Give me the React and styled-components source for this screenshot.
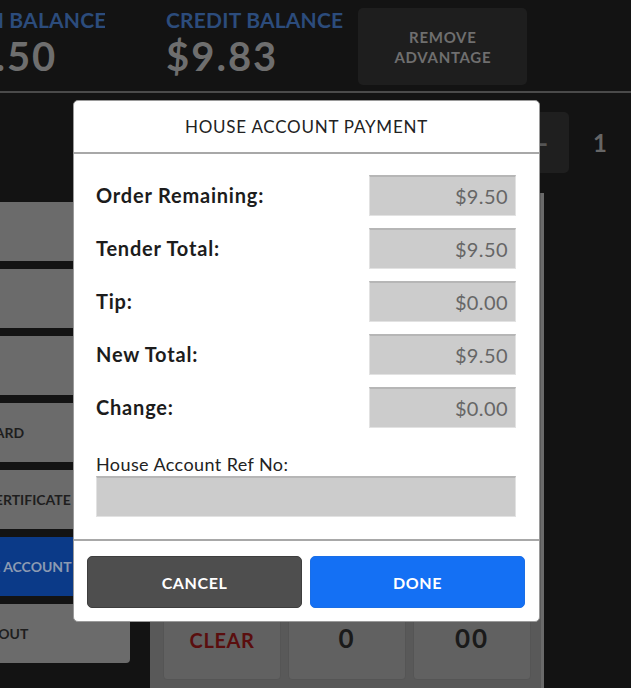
import React from "react";
import styled, { createGlobalStyle } from "styled-components";

const Global = createGlobalStyle`
  html, body { margin: 0; padding: 0; background: #131313; }
  body { font-family: Lato, "Open Sans", sans-serif; }
  * { box-sizing: border-box; }
`;

const Page = styled.div`
  position: relative;
  width: 631px;
  height: 688px;
  overflow: hidden;
  background: #131313;
  display: flex;
  flex-direction: column;
`;

const TopBar = styled.div`
  height: 93px;
  flex: none;
  border-bottom: 2px solid #4a4a4a;
  display: flex;
  align-items: flex-start;
`;

const ClipBlock = styled.div`
  width: 105px;
  flex: none;
  display: flex;
  justify-content: flex-end;
  overflow: hidden;
  margin-right: 61px;
`;

const Balance = styled.div`
  display: flex;
  flex-direction: column;
  padding-top: 8px;
  white-space: nowrap;
  flex: none;
  width: ${(p) => (p.$width ? `${p.$width}px` : "auto")};
  text-align: ${(p) => (p.$width ? "right" : "left")};
`;

const BalanceLabel = styled.div`
  color: #2c4c7c;
  font-weight: 700;
  font-size: 21px;
  line-height: 24px;
  letter-spacing: 0.2px;
`;

const BalanceAmount = styled.div`
  color: #6e6e6e;
  font-weight: 700;
  font-size: 40px;
  line-height: 48px;
  letter-spacing: 2px;
  text-align: left;
`;

const DarkButton = styled.div`
  margin-left: 15px;
  margin-top: 8px;
  width: 169px;
  height: 77px;
  border-radius: 5px;
  background: #1e1e1e;
  color: #6f6f6f;
  font-weight: 700;
  font-size: 15px;
  line-height: 20px;
  letter-spacing: 0.7px;
  text-align: center;
  display: flex;
  align-items: center;
  justify-content: center;
`;

const Main = styled.div`
  flex: 1;
  display: flex;
  min-height: 0;
`;

const LeftCol = styled.div`
  margin-left: -78px;
  width: 208px;
  padding-top: 109px;
  display: flex;
  flex-direction: column;
  gap: 8px;
  flex: none;
`;

const TenderButton = styled.div`
  height: 59px;
  padding-left: 30px;
  border-radius: 0 4px 4px 0;
  background: ${(p) => (p.$active ? "#0b3a88" : "#6b6b6b")};
  color: ${(p) => (p.$active ? "#8c9ab2" : "#1e1e1e")};
  font-weight: 700;
  font-size: 14px;
  display: flex;
  align-items: center;
  white-space: nowrap;
`;

const RightArea = styled.div`
  margin-left: 20px;
  flex: 1;
  display: flex;
  flex-direction: column;
`;

const QtyRow = styled.div`
  margin-top: 19px;
  height: 61px;
  display: flex;
  justify-content: flex-end;
  align-items: center;
`;

const MinusButton = styled.div`
  width: 58px;
  height: 61px;
  border-radius: 5px;
  background: #1f1f1f;
  color: #555;
  font-size: 30px;
  font-weight: 700;
  display: flex;
  align-items: center;
  justify-content: center;
`;

const Qty = styled.div`
  width: 62px;
  text-align: center;
  color: #666;
  font-weight: 700;
  font-size: 24px;
`;

const KeypadPanel = styled.div`
  margin-top: 20px;
  width: 394px;
  flex: 1;
  background: #595959;
  border-right: 3px solid #6a6a6a;
  display: flex;
  flex-direction: column;
  justify-content: flex-end;
  padding: 0 10px 8px 13px;
`;

const KeyGrid = styled.div`
  display: grid;
  grid-template-columns: repeat(3, 1fr);
  grid-auto-rows: 77px;
  gap: 7px;
`;

const Key = styled.div`
  border-radius: 4px;
  background: #616161;
  border: 1px solid #555;
  display: flex;
  justify-content: center;
  padding-top: ${(p) => (p.$danger ? "22px" : "20px")};
  font-weight: 700;
  font-size: ${(p) => (p.$danger ? "20px" : "26px")};
  letter-spacing: ${(p) => (p.$danger ? "0.6px" : "2px")};
  line-height: 28px;
  color: ${(p) => (p.$danger ? "#5a0e0e" : "#1a1a1a")};
`;

const Overlay = styled.div`
  position: absolute;
  inset: 0;
  padding: 100px 0 0 73px;
`;

const Modal = styled.div`
  width: 467px;
  background: #fff;
  border-radius: 5px;
  border: 1px solid #9a9a9a;
  overflow: hidden;
  color: #1c1c1c;
`;

const ModalHeader = styled.div`
  height: 53px;
  border-bottom: 2px solid #a8a8a8;
  display: flex;
  align-items: center;
  justify-content: center;
  font-size: 17px;
  letter-spacing: 0.75px;
  color: #222;
`;

const ModalBody = styled.div`
  padding: 21px 23px 22px 22px;
  display: flex;
  flex-direction: column;
  gap: 12px;
`;

const Row = styled.div`
  display: flex;
  align-items: center;
  justify-content: space-between;
  height: 41px;
`;

const RowLabel = styled.div`
  font-weight: 700;
  font-size: 20px;
  letter-spacing: 0.8px;
  margin-top: -2px;
`;

const ValueBox = styled.div`
  width: 147px;
  height: 41px;
  background: #cccccc;
  border: 1px solid #e2e2e2;
  border-top: 2px solid #b6b6b6;
  color: #666;
  font-size: 20px;
  letter-spacing: 0.4px;
  display: flex;
  align-items: center;
  justify-content: flex-end;
  padding-right: 7px;
`;

const RefBlock = styled.div`
  margin-top: 14px;
  display: flex;
  flex-direction: column;
  gap: 2px;
`;

const RefLabel = styled.div`
  font-size: 18px;
  letter-spacing: 0.4px;
  line-height: 20px;
  color: #222;
`;

const RefInput = styled.div`
  height: 41px;
  background: #cccccc;
  border: 1px solid #e2e2e2;
  border-top: 2px solid #b6b6b6;
`;

const ModalFooter = styled.div`
  border-top: 2px solid #a8a8a8;
  padding: 15px 14px 13px 13px;
  display: flex;
  gap: 8px;
`;

const FooterButton = styled.div`
  flex: 1;
  height: 52px;
  border-radius: 5px;
  background: ${(p) => (p.$primary ? "#1470f4" : "#4e4e4e")};
  border: 1px solid ${(p) => (p.$primary ? "#1a6ee6" : "#3e3e3e")};
  color: #fff;
  font-weight: 700;
  font-size: 16px;
  letter-spacing: 0.6px;
  display: flex;
  align-items: center;
  justify-content: center;
`;

const rows = [
  ["Order Remaining:", "$9.50"],
  ["Tender Total:", "$9.50"],
  ["Tip:", "$0.00"],
  ["New Total:", "$9.50"],
  ["Change:", "$0.00"],
];

const tenders = [
  ["CASH", false],
  ["CHECK", false],
  ["EBT", false],
  ["GIFT CARD", false],
  ["GIFT CERTIFICATE", false],
  ["HOUSE ACCOUNT", true],
  ["CHECKOUT", false],
];

const keys = ["1", "2", "3", "4", "5", "6", "7", "8", "9"];

export default function App() {
  return (
    <Page>
      <Global />
      <TopBar>
        <ClipBlock>
          <Balance $width={160}>
            <BalanceLabel>OPEN BALANCE</BalanceLabel>
            <BalanceAmount>$9.50</BalanceAmount>
          </Balance>
        </ClipBlock>
        <Balance>
          <BalanceLabel>CREDIT BALANCE</BalanceLabel>
          <BalanceAmount>$9.83</BalanceAmount>
        </Balance>
        <DarkButton>
          REMOVE
          <br />
          ADVANTAGE
        </DarkButton>
      </TopBar>
      <Main>
        <LeftCol>
          {tenders.map(([t, a]) => (
            <TenderButton key={t} $active={a}>
              {t}
            </TenderButton>
          ))}
        </LeftCol>
        <RightArea>
          <QtyRow>
            <MinusButton>−</MinusButton>
            <Qty>1</Qty>
          </QtyRow>
          <KeypadPanel>
            <KeyGrid>
              {keys.map((k) => (
                <Key key={k}>{k}</Key>
              ))}
              <Key $danger>CLEAR</Key>
              <Key>0</Key>
              <Key>00</Key>
            </KeyGrid>
          </KeypadPanel>
        </RightArea>
      </Main>
      <Overlay>
        <Modal>
          <ModalHeader>HOUSE ACCOUNT PAYMENT</ModalHeader>
          <ModalBody>
            {rows.map(([l, v]) => (
              <Row key={l}>
                <RowLabel>{l}</RowLabel>
                <ValueBox>{v}</ValueBox>
              </Row>
            ))}
            <RefBlock>
              <RefLabel>House Account Ref No:</RefLabel>
              <RefInput />
            </RefBlock>
          </ModalBody>
          <ModalFooter>
            <FooterButton>CANCEL</FooterButton>
            <FooterButton $primary>DONE</FooterButton>
          </ModalFooter>
        </Modal>
      </Overlay>
    </Page>
  );
}
